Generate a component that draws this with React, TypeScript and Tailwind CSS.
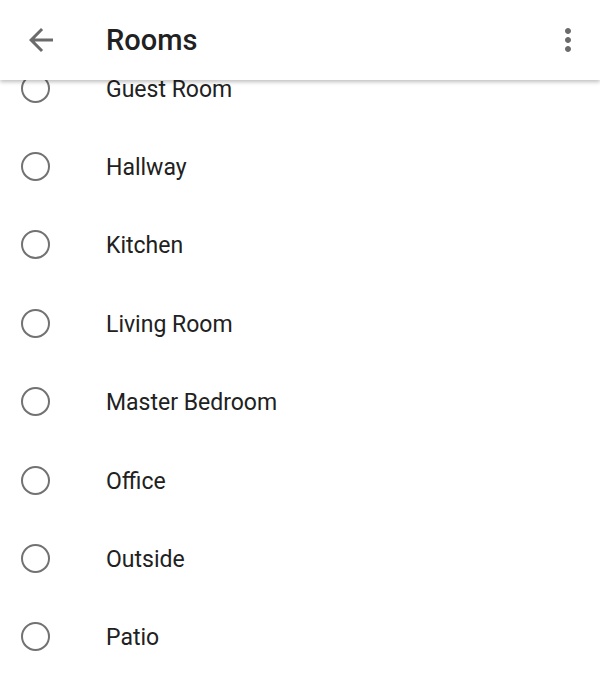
import React from "react";

const rooms = [
  "Guest Room",
  "Hallway",
  "Kitchen",
  "Living Room",
  "Master Bedroom",
  "Office",
  "Outside",
  "Patio",
];

export default function App() {
  return (
    <div
      className="relative h-[674px] w-[600px] overflow-hidden bg-white"
      style={{ fontFamily: "Roboto, 'Noto Sans', sans-serif" }}
    >
      <header className="relative z-10 flex h-[80px] items-center bg-white shadow-[0_2px_4px_rgba(0,0,0,0.25)]">
        <div className="flex w-[106px] items-center pl-[23px]">
          <svg width="36" height="36" viewBox="0 0 24 24" fill="#6b6b6b">
            <path d="M20 11H7.83l5.59-5.59L12 4l-8 8 8 8 1.41-1.41L7.83 13H20v-2z" />
          </svg>
        </div>
        <h1 className="flex-1 text-[29px] font-medium leading-none text-[#212121]">Rooms</h1>
        <div className="pr-[14px]">
          <svg width="36" height="36" viewBox="0 0 24 24" fill="#6b6b6b">
            <path d="M12 8c1.1 0 2-.9 2-2s-.9-2-2-2-2 .9-2 2 .9 2 2 2zm0 2c-1.1 0-2 .9-2 2s.9 2 2 2 2-.9 2-2-.9-2-2-2zm0 6c-1.1 0-2 .9-2 2s.9 2 2 2 2-.9 2-2-.9-2-2-2z" />
          </svg>
        </div>
      </header>
      <ul className="-mt-[31px] flex flex-col">
        {rooms.map((r) => (
          <li key={r} className="flex h-[78.4px] items-center">
            <div className="flex w-[106px] items-center pl-[21px]">
              <span className="box-border block h-[29px] w-[29px] rounded-full border-[2.5px] border-[#727272]" />
            </div>
            <span className="pt-[2px] text-[23px] leading-none text-[#212121]">{r}</span>
          </li>
        ))}
      </ul>
    </div>
  );
}
